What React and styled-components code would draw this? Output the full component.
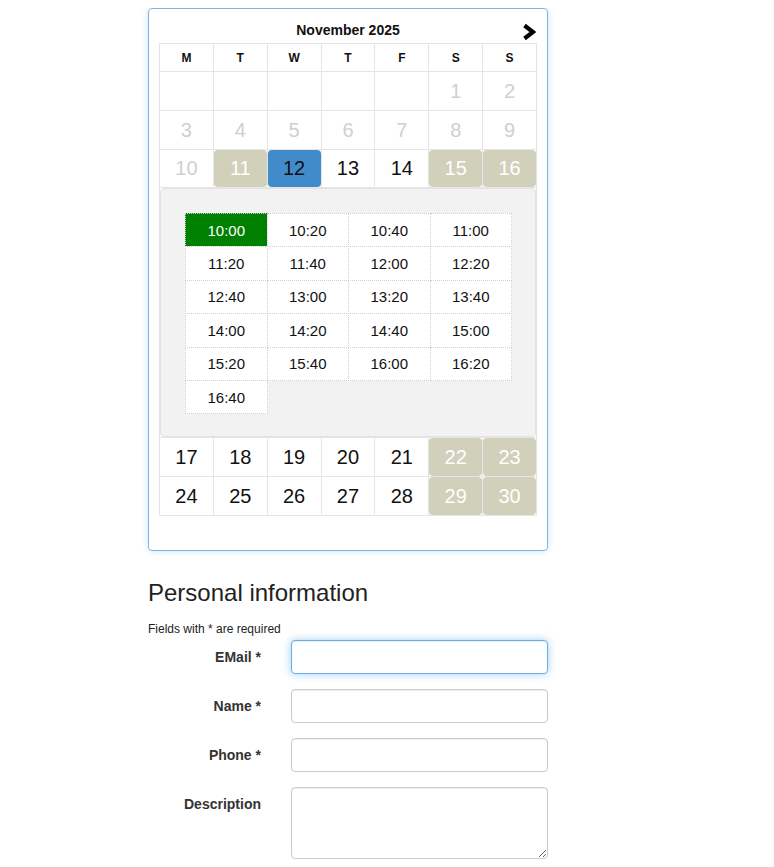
import styled, { createGlobalStyle } from "styled-components";

const GlobalStyle = createGlobalStyle`
  body {
    margin: 8px;
    font-family: "Liberation Sans", Arial, sans-serif;
    color: #333;
    background: #fff;
  }
  * { box-sizing: border-box; }
`;

const Page = styled.div`
  margin-left: 140px;
  width: 400px;
`;

const Card = styled.div`
  width: 400px;
  border: 1px solid #82b3db;
  border-radius: 4px;
  box-shadow: 0 0 6px rgba(102, 175, 233, 0.35);
  padding: 0 10px 34px;
`;

const TitleRow = styled.div`
  display: grid;
  grid-template-columns: 1fr auto 1fr;
  height: 34px;
`;

const MonthTitle = styled.div`
  grid-column: 2;
  margin-top: 11px;
  font-size: 14px;
  line-height: 20px;
  font-weight: bold;
  color: #111;
`;

const NextButton = styled.div`
  grid-column: 3;
  justify-self: end;
  margin-top: 14px;
  margin-right: 1px;
  width: 14px;
  height: 18px;
  cursor: pointer;
`;

const Grid = styled.div`
  display: grid;
  grid-template-columns: repeat(7, 1fr);
  border-top: 1px solid #e5e5e5;
  border-left: 1px solid #e5e5e5;
`;

const HeadCell = styled.div`
  height: 28px;
  border-right: 1px solid #e5e5e5;
  border-bottom: 1px solid #e5e5e5;
  display: flex;
  align-items: center;
  justify-content: center;
  font-size: 12px;
  font-weight: bold;
  color: #111;
`;

const DayCell = styled.div`
  height: ${({ $height }) => $height}px;
  border-right: 1px solid #e5e5e5;
  border-bottom: 1px solid #e5e5e5;
`;

const dayStyles = {
  empty: "background: transparent; color: transparent;",
  past: "background: transparent; color: #cfcfcf;",
  open: "background: transparent; color: #111;",
  free: "background: #d0d0bb; color: #fff; cursor: pointer;",
  selected: "background: #428bca; color: #111; cursor: pointer;",
};

const DayNum = styled.div`
  height: 100%;
  display: flex;
  align-items: center;
  justify-content: center;
  font-size: 20px;
  border-radius: 4px;
  ${({ $kind }) => dayStyles[$kind]}
`;

const PanelCell = styled.div`
  grid-column: 1 / -1;
  border-right: 1px solid #e5e5e5;
  border-bottom: 1px solid #e5e5e5;
`;

const SlotPanel = styled.div`
  background: #f2f2f2;
  border: 1px solid #e2e2e2;
  border-radius: 4px;
  padding: 24px 24px 23px;
`;

const SlotGrid = styled.div`
  display: grid;
  grid-template-columns: repeat(4, 1fr);
  grid-auto-rows: 33.4px;
`;

const Slot = styled.div`
  display: flex;
  align-items: center;
  justify-content: center;
  margin: 0 -1px -1px 0;
  border: 1px dotted #cfcfcf;
  font-size: 15px;
  cursor: pointer;
  background: ${({ $active }) => ($active ? "#008000" : "#fff")};
  color: ${({ $active }) => ($active ? "#fff" : "#111")};
`;

const Heading = styled.h3`
  margin: 29px 0 0;
  font-size: 24px;
  line-height: 26px;
  font-weight: normal;
  color: #222;
`;

const Required = styled.p`
  margin: 15px 0 2px;
  font-size: 12px;
  line-height: 17px;
  color: #222;
`;

const Form = styled.form`
  display: grid;
  grid-template-columns: 113px 257px;
  column-gap: 30px;
  row-gap: 15px;
`;

const Label = styled.label`
  padding-top: 7px;
  text-align: right;
  font-size: 14px;
  line-height: 20px;
  font-weight: bold;
  color: #333;
`;

const fieldCss = `
  width: 100%;
  border: 1px solid #ccc;
  border-radius: 4px;
  box-shadow: inset 0 1px 1px rgba(0, 0, 0, 0.075);
  padding: 6px 12px;
  font-family: "Liberation Sans", Arial, sans-serif;
  font-size: 14px;
  color: #555;
  outline: none;
  &:focus {
    border-color: #66afe9;
    box-shadow: inset 0 1px 1px rgba(0, 0, 0, 0.075), 0 0 8px rgba(102, 175, 233, 0.6);
  }
`;

const Input = styled.input`
  ${fieldCss}
  height: 34px;
`;

const TextArea = styled.textarea`
  ${fieldCss}
  height: 72px;
  resize: vertical;
  display: block;
`;

const weekDays = ["M", "T", "W", "T", "F", "S", "S"];

const weeksBefore = [
  [["", "empty"], ["", "empty"], ["", "empty"], ["", "empty"], ["", "empty"], [1, "past"], [2, "past"]],
  [[3, "past"], [4, "past"], [5, "past"], [6, "past"], [7, "past"], [8, "past"], [9, "past"]],
  [[10, "past"], [11, "free"], [12, "selected"], [13, "open"], [14, "open"], [15, "free"], [16, "free"]],
];

const weeksAfter = [
  [[17, "open"], [18, "open"], [19, "open"], [20, "open"], [21, "open"], [22, "free"], [23, "free"]],
  [[24, "open"], [25, "open"], [26, "open"], [27, "open"], [28, "open"], [29, "free"], [30, "free"]],
];

const slots = [
  "10:00", "10:20", "10:40", "11:00",
  "11:20", "11:40", "12:00", "12:20",
  "12:40", "13:00", "13:20", "13:40",
  "14:00", "14:20", "14:40", "15:00",
  "15:20", "15:40", "16:00", "16:20",
  "16:40",
];

// the week holding the selected day sits right above the slot panel and is a pixel shorter
const renderWeeks = (weeks, prefix, shortLast) =>
  weeks.flatMap((week, w) =>
    week.map(([n, kind], d) => (
      <DayCell
        key={`${prefix}-${w}-${d}`}
        $height={shortLast && w === weeks.length - 1 ? 38 : 39}
      >
        <DayNum $kind={kind}>{n}</DayNum>
      </DayCell>
    ))
  );

const App = () => {
  return (
    <Page>
      <GlobalStyle />
      <Card>
        <TitleRow>
          <MonthTitle>November 2025</MonthTitle>
          <NextButton>
            <svg width="14" height="18" viewBox="0 0 14 18">
              <polyline points="2.5,2.5 11,9 2.5,15.5" fill="none" stroke="#000" strokeWidth="4.2" strokeLinejoin="miter" />
            </svg>
          </NextButton>
        </TitleRow>
        <Grid>
          {weekDays.map((d, i) => (
            <HeadCell key={i}>{d}</HeadCell>
          ))}
          {renderWeeks(weeksBefore, "a", true)}
          <PanelCell>
            <SlotPanel>
              <SlotGrid>
                {slots.map((s, i) => (
                  <Slot key={s} $active={i === 0}>{s}</Slot>
                ))}
              </SlotGrid>
            </SlotPanel>
          </PanelCell>
          {renderWeeks(weeksAfter, "b", false)}
        </Grid>
      </Card>

      <Heading>Personal information</Heading>
      <Required>Fields with * are required</Required>
      <Form>
        <Label htmlFor="email">EMail *</Label>
        <Input id="email" type="email" autoFocus />
        <Label htmlFor="name">Name *</Label>
        <Input id="name" type="text" />
        <Label htmlFor="phone">Phone *</Label>
        <Input id="phone" type="text" />
        <Label htmlFor="desc">Description</Label>
        <TextArea id="desc" />
      </Form>
    </Page>
  );
};

export default App;
